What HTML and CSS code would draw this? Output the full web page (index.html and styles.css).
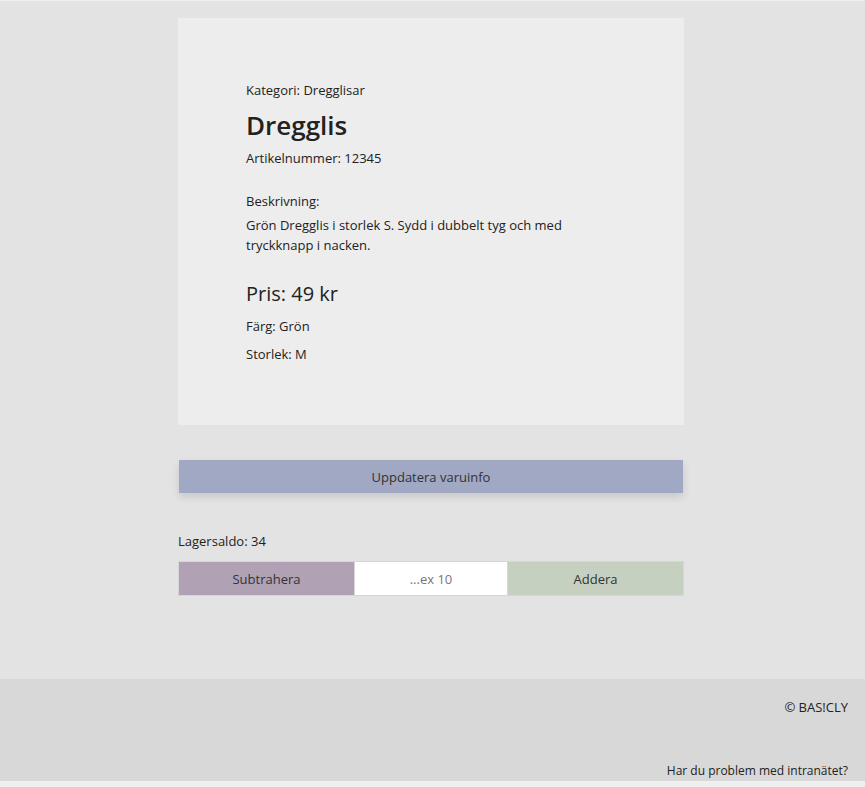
FILE: index.html
```html
<!DOCTYPE html>
<html lang="sv">
<head>
<meta charset="utf-8">
<title>Dregglis</title>
<link rel="stylesheet" href="styles.css">
</head>
<body>
<div class="page">
  <main class="main">
    <section class="card">
      <p class="category">Kategori: Dregglisar</p>
      <h1 class="title">Dregglis</h1>
      <p class="artnr">Artikelnummer: 12345</p>
      <p class="desc-label">Beskrivning:</p>
      <p class="desc">Grön Dregglis i storlek S. Sydd i dubbelt tyg och med tryckknapp i nacken.</p>
      <p class="price">Pris: 49 kr</p>
      <p class="attr">Färg: Grön</p>
      <p class="attr">Storlek: M</p>
    </section>
    <button class="update-btn" type="button">Uppdatera varuinfo</button>
    <p class="stock">Lagersaldo: 34</p>
    <div class="stock-row">
      <button class="sub-btn" type="button">Subtrahera</button>
      <input class="qty" type="text" placeholder="...ex 10">
      <button class="add-btn" type="button">Addera</button>
    </div>
  </main>
  <footer class="footer">
    <p class="copy">© BAS!CLY</p>
    <p class="help">Har du problem med intranätet?</p>
  </footer>
</div>
</body>
</html>
```
FILE: styles.css
```css
html {
  background: #efefef;
}
body {
  margin: 0;
  padding: 1px 0 6px;
  font-family: "Open Sans", "Noto Sans", sans-serif;
  font-size: 13px;
  color: #222;
}
.page {
  background: #e3e3e3;
}
.main {
  width: 506px;
  margin-left: calc(50% - 254.5px);
  padding: 17px 0 83px;
}
.card {
  background: #ededed;
  padding: 62px 68px 61px;
}
.card p,
.card h1 {
  margin: 0;
}
.category {
  line-height: 20px;
}
.title {
  font-size: 26px;
  font-weight: 600;
  line-height: 32px;
  margin-top: 9px !important;
}
.artnr {
  line-height: 20px;
  margin-top: 7px !important;
}
.desc-label {
  line-height: 20px;
  margin-top: 23px !important;
}
.desc {
  line-height: 20px;
  margin-top: 4px !important;
  width: 340px;
}
.price {
  font-size: 20px;
  line-height: 28px;
  margin-top: 25px !important;
}
.attr {
  line-height: 20px;
  margin-top: 8px !important;
}
.update-btn {
  display: block;
  width: 504px;
  height: 33px;
  margin: 35px auto 0;
  border: none;
  background: #a0a8c3;
  color: #333;
  font-family: inherit;
  font-size: 13px;
  box-shadow: 0 4px 8px rgba(0, 0, 0, 0.12);
}
.stock {
  margin: 38px 0 0;
  line-height: 20px;
}
.stock-row {
  display: flex;
  margin-top: 10px;
  height: 35px;
}
.stock-row > * {
  box-sizing: border-box;
  height: 35px;
  font-family: inherit;
  font-size: 13px;
  color: #333;
  border: 1px solid #d6d6d6;
  margin: 0;
}
.sub-btn {
  width: 177px;
  background: #b1a1b5;
}
.qty {
  width: 152px;
  background: #fff;
  text-align: center;
  padding: 0;
  border-left: none;
  border-right: none;
}
.qty::placeholder {
  color: #777;
}
.add-btn {
  width: 177px;
  background: #c6d0c1;
}
.footer {
  background: #d8d8d8;
  height: 102px;
  box-sizing: border-box;
  display: flex;
  flex-direction: column;
  align-items: flex-end;
  justify-content: space-between;
  padding: 18px 17px 1px 0;
}
.footer p {
  margin: 0;
  color: #222;
}
.copy {
  font-size: 13px;
  line-height: 20px;
}
.help {
  font-size: 12px;
  line-height: 18px;
}
```
